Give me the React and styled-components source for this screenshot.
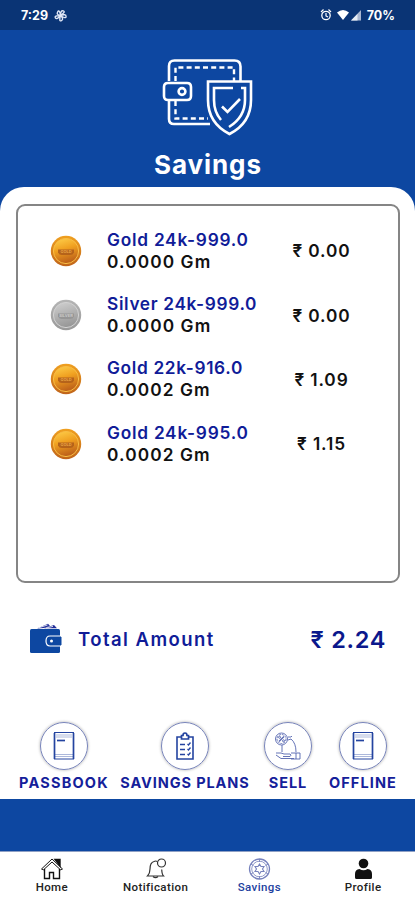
import React from "react";
import styled, { createGlobalStyle } from "styled-components";

const holdings = [
  { name: "Gold 24k-999.0", weight: "0.0000 Gm", price: "₹ 0.00", metal: "gold", nameGap: 0.75 },
  { name: "Silver 24k-999.0", weight: "0.0000 Gm", price: "₹ 0.00", metal: "silver", nameGap: 0.65 },
  { name: "Gold 22k-916.0", weight: "0.0002 Gm", price: "₹ 1.09", metal: "gold", nameGap: 0.65 },
  { name: "Gold 24k-995.0", weight: "0.0002 Gm", price: "₹ 1.15", metal: "gold", nameGap: 0.75 },
];

const metals = {
  gold: { light: "#ffd24d", mid: "#f0a020", dark: "#c0641a", ring: "#f8bd45", band: "#b5631a", text: "#e9a646" },
  silver: { light: "#d2d2d2", mid: "#b5b5b5", dark: "#999999", ring: "#d2d2d2", band: "#969696", text: "#c9c9c9" },
};

const Coin = ({ metal }) => {
  const c = metals[metal];
  return (
    <svg width="32" height="32" viewBox="0 0 32 32">
      <defs>
        <linearGradient id={`${metal}-rim`} x1="0" y1="0" x2="0" y2="1">
          <stop offset="0" stopColor={c.mid} />
          <stop offset="1" stopColor={c.dark} />
        </linearGradient>
        <linearGradient id={`${metal}-face`} x1="0" y1="0" x2="0.3" y2="1">
          <stop offset="0" stopColor={c.light} />
          <stop offset="0.5" stopColor={c.mid} />
          <stop offset="1" stopColor={c.dark} />
        </linearGradient>
      </defs>
      <circle cx="16" cy="16" r="15.2" fill={`url(#${metal}-rim)`} />
      <circle cx="16" cy="16" r="12.6" fill={`url(#${metal}-face)`} stroke={c.ring} strokeWidth="1" />
      <path d="M8 14.5h16v3q-1 2.5-4 2.5h-8q-3 0-4-2.5z" fill={c.band} />
      <text x="16" y="17.500" textAnchor="middle" fontSize="4" fontWeight="700" fontFamily="Inter, sans-serif" fill={c.text}>
        {metal.toUpperCase()}
      </text>
    </svg>
  );
};

const SavingsLogo = () => (
  <svg width="92" height="80" viewBox="0 0 92 80" fill="none" stroke="#fff" strokeWidth="2.6">
    <path d="M7 24V9q0-5.500 5.500-5.500h60q6 0 6 6V24M7 44v18q0 5 5 5h36" />
    <path d="M13.500 24V10.500H72V24M13.500 44v17.500H46" strokeDasharray="5 3.2" strokeWidth="2.400" />
    <path d="M6 26h19q4 0 4 4v9q0 4-4 4H6q-4 0-4-4v-9q0-4 4-4z" fill="#0d47a1" />
    <circle cx="20" cy="34.500" r="3.400" />
    <path d="M46 24.500h43V43q0 23-21.500 34Q46 66 46 43z" fill="#0d47a1" />
    <path d="M71 31H52v12q0 12 7 20M79 31h4v12q0 17-16 27" />
    <path d="M60 49.500l5.500 5.500L78 42" />
  </svg>
);

const WalletIcon = () => (
  <svg width="34" height="32" viewBox="0 0 34 32">
    <path d="M8 5.500 19 .7l2 2.300-6 2zM15 5.300l10-3.200 3 3.200z" fill="#24309a" />
    <path d="M10 4.700 18.500 2M17 5l7-1.600" stroke="#fff" strokeWidth=".8" />
    <path d="M1 7.500q0-1.500 1.500-1.500h27q1.500 0 1.500 1.500v21q0 1.500-1.500 1.500h-27Q1 30 1 28.500z" fill="#0d47a1" />
    <path d="M32 13H21q-4 0-4 5t4 5h11" fill="#0d47a1" stroke="#fff" strokeWidth="1.200" />
    <path d="M30 14h2.500v8H30z" fill="#0d47a1" />
    <circle cx="22.500" cy="18" r="1.500" fill="#fff" />
  </svg>
);

const BookIcon = () => (
  <svg width="24" height="30" viewBox="0 0 24 30" fill="none" stroke="#2444a0">
    <path d="M2.500 2v26M21.500 2v26" strokeWidth="1.700" />
    <path d="M2 1.500h20M2 28h20" strokeWidth="1" />
    <path d="M4 4h16M4 6h16M3 23.500h18M3 25.500h18" strokeWidth=".7" opacity=".55" />
    <path d="M5 9.500h8" strokeWidth="1.700" />
  </svg>
);

const PlansIcon = () => (
  <svg width="20" height="30" viewBox="0 0 20 30" fill="none" stroke="#2444a0">
    <path d="M6 6H2v22h16V6h-4" strokeWidth="1.600" />
    <path d="M6.500 4.500H8q0-2.500 2-2.500t2 2.500h1.500v3.500h-7z" strokeWidth="1.700" />
    <path d="M5 13.500h5M5 18.500h5M5 23.500h5" strokeWidth="1.300" />
    <path d="m12.500 13 1 1 2-2.500m-3 6.500 1 1 2-2.500m-3 6.500 1 1 2-2.500" strokeWidth="1.300" />
  </svg>
);

const SellIcon = () => (
  <svg width="28" height="30" viewBox="0 0 28 30" fill="none" stroke="#5364af" strokeWidth=".9">
    <circle cx="7.500" cy="8" r="6" />
    <circle cx="7.500" cy="8" r="4.500" strokeDasharray="2 1" />
    <path d="m5 10.500 5-5" strokeWidth="1.200" />
    <circle cx="5.600" cy="6.300" r="1" />
    <circle cx="9.500" cy="9.800" r="1" />
    <path d="M14 6h3l1-1M14 9l3-1q5 4 5 13M8 14v7" />
    <path d="M2 22h5l3 1h6q2 1 0 2.500H9M2 24l5 3.500h13M17 22h9v6h-9M22 22v6" />
  </svg>
);

const HomeIcon = () => (
  <svg width="24" height="24" viewBox="0 0 24 24" fill="none" stroke="#111" strokeWidth="1.400">
    <path d="M4.500 12v9.500h5v-6h4v6h6V12" />
    <path d="M1.500 12 12 2l10.500 10-2 .8L12 5l-8.500 7.800z" strokeWidth="1" />
    <path d="M15 2.500h5V9z" fill="#111" />
  </svg>
);

const BellIcon = () => (
  <svg width="24" height="24" viewBox="0 0 24 24" fill="none" stroke="#333" strokeWidth="1.200">
    <path d="M13 4.500q-1-1-3 0Q6 5.500 6 12q0 4.500-2.500 7h16q-1.500-1.500-1.800-6.500" />
    <path d="M9 19.500q2.500 2.500 5 0" />
    <circle cx="17.500" cy="6" r="4" />
  </svg>
);

const SavingsIcon = () => (
  <svg width="24" height="24" viewBox="0 0 24 24" fill="none" stroke="#7782bd" strokeWidth="1.300">
    <circle cx="12.500" cy="12" r="10" />
    <circle cx="12.500" cy="12" r="7.800" strokeWidth=".8" />
    <path d="m12.500 7 1.500 2.500h3L15.500 12l1.500 2.500h-3L12.500 17 11 14.500H8L9.500 12 8 9.500h3z" strokeWidth="1.100" />
    <path d="M12.500 2v3M12.500 19v3M4 7l2.500 1.500M18.500 15.500 21 17M4 17l2.500-1.500M18.500 8.500 21 7" strokeWidth=".9" />
  </svg>
);

const ProfileIcon = () => (
  <svg width="24" height="24" viewBox="0 0 24 24" fill="#111">
    <circle cx="12.500" cy="6.500" r="4.800" />
    <path d="M4 20.500V17q0-4.500 4.500-5 4 2.500 8 0 4.500.5 4.500 5v3.500q0 1.500-1.500 1.500h-14Q4 22 4 20.500z" />
  </svg>
);

const StatusIcons = () => (
  <svg width="42" height="16" viewBox="0 0 42 16" fill="none" stroke="#fff">
    <circle cx="6" cy="8.500" r="4.200" strokeWidth="1.300" />
    <path d="M6 6v3l2 1M1 5l2.500-2.500M11 5 8.500 2.500" strokeWidth="1.200" />
    <path d="M17 5.500q6-5 12 0L23 13z" fill="#fff" stroke="none" />
    <path d="M31 13.500 41 3v10.500z" fill="#a9b7d1" stroke="none" />
    <path d="M31 13.500 37.500 7v6.500z" fill="#e8edf6" stroke="none" />
  </svg>
);

const FanIcon = () => (
  <svg width="13" height="13" viewBox="0 0 14 14" fill="none" stroke="#dfe6f5" strokeWidth="1.500">
    <path d="M7 7Q2 6 4 3t3 4q0-6 3-5T7 7q6-2 6 1T7 7q4 4 1 5.500T7 7q-4 5-5.500 2.500T7 7z" />
  </svg>
);

const actions = [
  { label: "PASSBOOK", icon: <BookIcon />, gap: 1.2, width: 90 },
  { label: "SAVINGS PLANS", icon: <PlansIcon />, gap: 0.9, width: 130 },
  { label: "SELL", icon: <SellIcon />, gap: 0.9, width: 54 },
  { label: "OFFLINE", icon: <BookIcon />, gap: 1.1, width: 74 },
];

const tabs = [
  { label: "Home", icon: <HomeIcon /> },
  { label: "Notification", icon: <BellIcon /> },
  { label: "Savings", icon: <SavingsIcon />, active: true },
  { label: "Profile", icon: <ProfileIcon /> },
];

const App = () => {
  return (
    <Screen>
      <GlobalStyle />
      <StatusBar>
        <StatusGroup>
          7:29
          <FanIcon />
        </StatusGroup>
        <StatusGroup $tight>
          <StatusIcons />
          70%
        </StatusGroup>
      </StatusBar>
      <Header>
        <SavingsLogo />
        <Title>Savings</Title>
      </Header>
      <Panel>
        <Holdings>
          {holdings.map((item) => (
            <HoldingRow key={item.name}>
              <Coin metal={item.metal} />
              <HoldingInfo>
                <HoldingName $gap={item.nameGap}>{item.name}</HoldingName>
                <HoldingWeight>{item.weight}</HoldingWeight>
              </HoldingInfo>
              <HoldingPrice>{item.price}</HoldingPrice>
            </HoldingRow>
          ))}
        </Holdings>
        <TotalRow>
          <WalletIcon />
          <TotalLabel>Total Amount</TotalLabel>
          <TotalValue>₹ 2.24</TotalValue>
        </TotalRow>
        <Actions>
          {actions.map((action) => (
            <Action key={action.label} $width={action.width}>
              <ActionCircle>{action.icon}</ActionCircle>
              <ActionLabel $gap={action.gap}>{action.label}</ActionLabel>
            </Action>
          ))}
        </Actions>
      </Panel>
      <TabBar>
        {tabs.map((tab) => (
          <Tab key={tab.label} $active={tab.active}>
            {tab.icon}
            <span>{tab.label}</span>
          </Tab>
        ))}
      </TabBar>
    </Screen>
  );
};

export default App;

const GlobalStyle = createGlobalStyle`
  * {
    box-sizing: border-box;
  }
  body {
    margin: 0;
    overflow: hidden;
  }
  svg {
    display: block;
    flex-shrink: 0;
  }
`;

const Screen = styled.div`
  display: flex;
  flex-direction: column;
  width: 415px;
  height: 900px;
  background: #0d47a1;
  font-family: Inter, "Open Sans", sans-serif;
  white-space: nowrap;
`;

const StatusBar = styled.div`
  display: flex;
  justify-content: space-between;
  align-items: center;
  height: 30px;
  padding: 0 20px 0 21px;
  background: #0a3475;
`;

const StatusGroup = styled.div`
  display: flex;
  align-items: center;
  gap: ${(props) => (props.$tight ? "5px" : "6px")};
  color: #fff;
  font-size: 12.5px;
  font-weight: 700;
`;

const Header = styled.header`
  display: flex;
  flex-direction: column;
  align-items: center;
  height: 157px;
  padding: 27px 0 0 1px;
`;

const Title = styled.h1`
  margin: 11px 0 0;
  color: #fff;
  font-size: 26px;
  font-weight: 700;
  line-height: 34px;
  letter-spacing: 0.9px;
`;

const Panel = styled.main`
  display: flex;
  flex-direction: column;
  height: 612px;
  padding: 17px 15px 0 16px;
  border-radius: 24px 24px 0 0;
  background: #fff;
`;

const Holdings = styled.section`
  height: 379px;
  padding-top: 12.5px;
  border: 2px solid #858585;
  border-radius: 9px;
`;

const HoldingRow = styled.div`
  display: flex;
  align-items: center;
  height: 64.4px;
  padding-left: 32px;
`;

const HoldingInfo = styled.div`
  width: 168px;
  margin-left: 25px;
  font-size: 17.3px;
  font-weight: 600;
  line-height: 22px;
`;

const HoldingName = styled.div`
  color: #101c98;
  letter-spacing: ${(props) => props.$gap}px;
`;

const HoldingWeight = styled.div`
  color: #111;
  letter-spacing: 1.1px;
`;

const HoldingPrice = styled.div`
  width: 93px;
  color: #111;
  font-size: 17.3px;
  font-weight: 600;
  letter-spacing: 0.9px;
  text-align: center;
`;

const TotalRow = styled.div`
  display: flex;
  align-items: center;
  height: 34px;
  margin-top: 39px;
  padding: 0 14px 0 13px;
`;

const TotalLabel = styled.span`
  margin-left: 15px;
  color: #101c98;
  font-size: 18.5px;
  font-weight: 600;
  letter-spacing: 1.45px;
`;

const TotalValue = styled.span`
  margin-left: auto;
  color: #0b188c;
  font-size: 23.5px;
  font-weight: 600;
  letter-spacing: 0.7px;
`;

const Actions = styled.div`
  display: flex;
  justify-content: space-between;
  margin-top: 66px;
  padding-left: 3px;
`;

const Action = styled.div`
  display: flex;
  flex-direction: column;
  align-items: center;
  width: ${(props) => props.$width}px;
`;

const ActionCircle = styled.div`
  display: flex;
  justify-content: center;
  align-items: center;
  width: 48px;
  height: 48px;
  border: 1.5px solid #7884ba;
  border-radius: 50%;
  box-shadow: 0 0 3px rgba(0, 0, 0, 0.35);
`;

const ActionLabel = styled.span`
  margin-top: 3px;
  color: #14209a;
  font-size: 14.5px;
  font-weight: 700;
  line-height: 20px;
  letter-spacing: ${(props) => props.$gap}px;
`;

const TabBar = styled.nav`
  display: grid;
  grid-template-columns: repeat(4, 1fr);
  height: 49px;
  margin-top: auto;
  border-top: 1px solid #8fa0c4;
  background: #fff;
`;

const Tab = styled.div`
  display: flex;
  flex-direction: column;
  align-items: center;
  padding-top: 5px;
  color: ${(props) => (props.$active ? "#1d3fa0" : "#222")};
  font-family: Roboto, sans-serif;
  font-size: 11.5px;
  font-weight: 500;
  line-height: 13px;
  letter-spacing: 0.4px;
`;
